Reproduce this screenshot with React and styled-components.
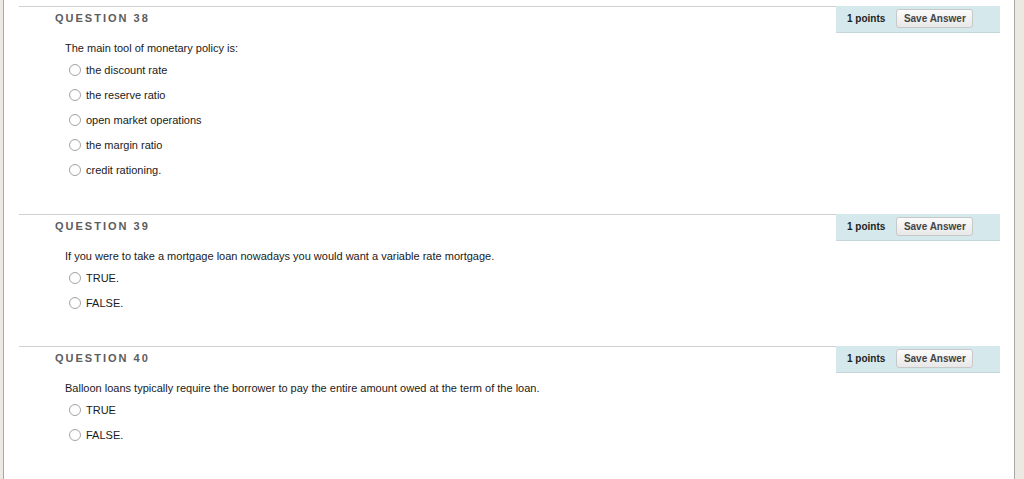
import React from "react";
import styled, { createGlobalStyle } from "styled-components";

const questions = [
  {
    num: 38,
    text: "The main tool of monetary policy is:",
    options: [
      "the discount rate",
      "the reserve ratio",
      "open market operations",
      "the margin ratio",
      "credit rationing.",
    ],
  },
  {
    num: 39,
    text: "If you were to take a mortgage loan nowadays you would want a variable rate mortgage.",
    options: ["TRUE.", "FALSE."],
  },
  {
    num: 40,
    text: "Balloon loans typically require the borrower to pay the entire amount owed at the term of the loan.",
    options: ["TRUE", "FALSE."],
  },
];

const App = () => {
  return (
    <>
      <GlobalStyle />
      <Page>
        {questions.map((q) => (
          <Section key={q.num}>
            <HeaderRow>
              <Label>QUESTION {q.num}</Label>
              <PointsBox>
                <Points>1 points</Points>
                <SaveBtn>Save Answer</SaveBtn>
              </PointsBox>
            </HeaderRow>
            <Body>
              <QText>{q.text}</QText>
              {q.options.map((o) => (
                <Option key={o}>
                  <Radio />
                  {o}
                </Option>
              ))}
            </Body>
          </Section>
        ))}
      </Page>
    </>
  );
};

export default App;

const GlobalStyle = createGlobalStyle`
  html, body {
    margin: 0;
    padding: 0;
    background: #ebe9e1;
    font-family: "Liberation Sans", Arial, sans-serif;
    overflow: hidden;
  }
`;

const Page = styled.div`
  box-sizing: border-box;
  width: 1012px;
  height: 479px;
  margin-left: 3px;
  background: #ffffff;
  border-left: 1px solid #a8a8a4;
  border-right: 1px solid #a8a8a4;
  padding: 6px 14px 0 15px;
`;

const Section = styled.div`
  margin-bottom: 32px;

  &:nth-child(2) {
    margin-bottom: 31px;
  }
`;

const HeaderRow = styled.div`
  box-sizing: border-box;
  height: 27px;
  border-top: 1px solid #d0d0d0;
  display: flex;
  justify-content: space-between;
  align-items: flex-start;
`;

const Label = styled.div`
  padding: 6px 0 0 36px;
  font-size: 11px;
  line-height: 11px;
  font-weight: bold;
  letter-spacing: 2px;
  color: #5c5c5c;
`;

const PointsBox = styled.div`
  box-sizing: border-box;
  width: 164px;
  height: 27px;
  margin-top: -1px;
  background: #d5e8ec;
  border-bottom: 1px solid #c4d6da;
  display: flex;
  align-items: center;
  padding: 0 0 2px 11px;
  gap: 11px;
`;

const Points = styled.span`
  font-size: 10px;
  font-weight: bold;
  color: #1e1e1e;
`;

const SaveBtn = styled.button`
  box-sizing: border-box;
  width: 77px;
  height: 19px;
  padding: 0;
  font-family: "Liberation Sans", Arial, sans-serif;
  font-size: 10px;
  font-weight: bold;
  color: #444;
  background: linear-gradient(#fbfbfb, #e8e8e8);
  border: 1px solid #c8c8c8;
  border-radius: 3px;
`;

const Body = styled.div`
  padding: 8px 0 0 46px;
  color: #1a1a1a;
  font-size: 11px;
`;

const QText = styled.div`
  line-height: 14px;
  margin-bottom: 2px;
`;

const Option = styled.div`
  height: 25px;
  display: flex;
  align-items: center;
  padding-left: 4px;
`;

const Radio = styled.span`
  box-sizing: border-box;
  width: 12px;
  height: 12px;
  margin-right: 5px;
  border-radius: 50%;
  border: 1px solid #a4a4a4;
  background: radial-gradient(circle at 50% 70%, #ffffff 60%, #efefef);
`;
